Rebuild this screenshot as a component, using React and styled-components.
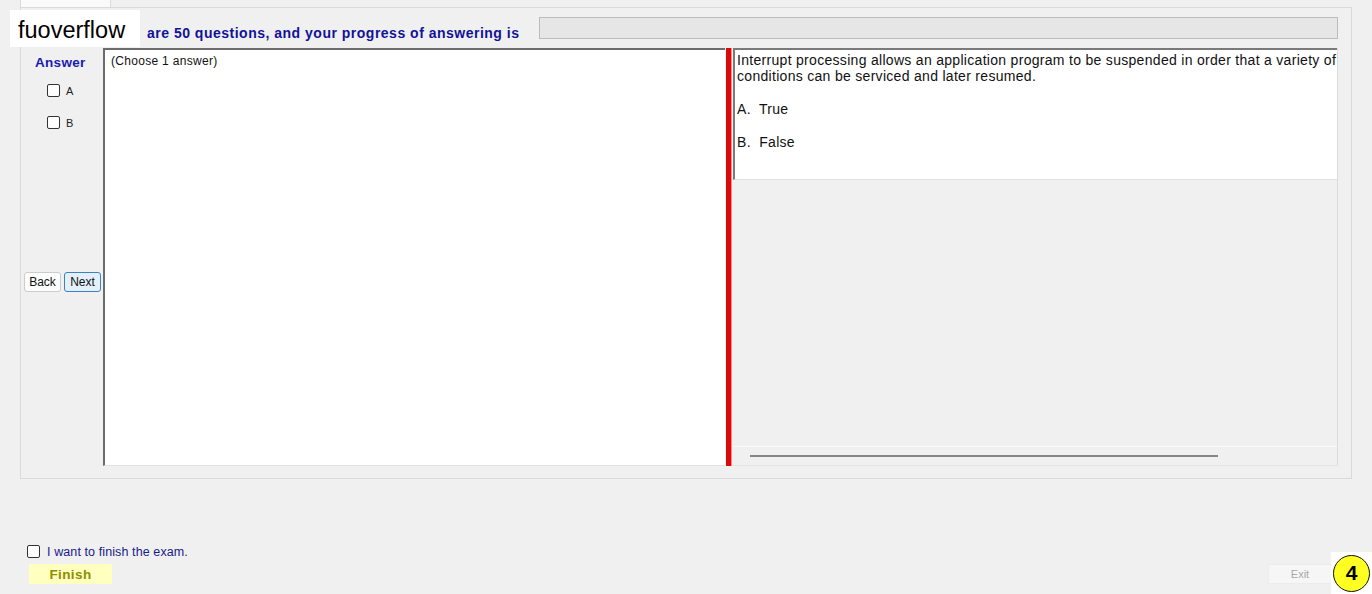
import React from 'react';
import styled, { createGlobalStyle } from 'styled-components';

const GlobalStyle = createGlobalStyle`
  html, body {
    margin: 0;
    padding: 0;
    background: #f0f0f0;
  }
  body {
    font-family: "Liberation Sans", Arial, sans-serif;
    width: 1372px;
    height: 594px;
    overflow: hidden;
  }
`;

const Screen = styled.div`
  position: relative;
  width: 1372px;
  height: 594px;
  background: #f0f0f0;
  display: flex;
  flex-direction: column;
`;

const TabStrip = styled.div`
  height: 7px;
  display: flex;
  padding-left: 20px;
`;

const Tab = styled.div`
  width: 89px;
  background: #fafafa;
  border: 1px solid #dadada;
  border-top: none;
  border-bottom: none;
`;

const TabPanel = styled.div`
  margin: 0 20px;
  height: 472px;
  box-sizing: border-box;
  border: 1px solid #dadada;
  padding: 9px 13px 0 3px;
  display: flex;
  flex-direction: column;
`;

const Header = styled.div`
  height: 22px;
  display: flex;
  align-items: center;
`;

const HeaderText = styled.div`
  padding-left: 123px;
  padding-top: 9px;
  font-size: 14px;
  letter-spacing: 0.5px;
  font-weight: bold;
  color: #12129a;
  white-space: nowrap;
`;

const Progress = styled.div`
  flex: 1;
  height: 22px;
  box-sizing: border-box;
  margin-left: 19px;
  background: #e6e6e6;
  border: 1px solid #bcbcbc;
`;

const Content = styled.div`
  margin-top: 9px;
  height: 418px;
  display: flex;
`;

const AnswerCol = styled.div`
  width: 79px;
  display: flex;
  flex-direction: column;
  padding-top: 8px;
`;

const AnswerTitle = styled.div`
  font-size: 13.5px;
  font-weight: bold;
  letter-spacing: 0.3px;
  color: #1b1bb0;
  line-height: 14px;
  padding-left: 11px;
`;

const Option = styled.label`
  display: flex;
  align-items: center;
  gap: 6px;
  margin-top: ${p => p.$top}px;
  padding-left: 23px;
  font-size: 11px;
  color: #222;
  height: 13px;
`;

const Box = styled.input.attrs({ type: 'checkbox' })`
  appearance: none;
  margin: 0;
  width: 13px;
  height: 13px;
  box-sizing: border-box;
  border: 1px solid #333;
  border-radius: 2px;
  background: #fff;
`;

const NavRow = styled.div`
  display: flex;
  gap: 3px;
  margin-top: 143px;
`;

const NavButton = styled.button`
  width: 37px;
  height: 20px;
  padding: 0;
  font-family: "Liberation Sans", Arial, sans-serif;
  font-size: 12px;
  color: #111;
  border-radius: 3px;
  border: 1px solid ${p => (p.$active ? '#3a82c0' : '#cccccc')};
  background: ${p => (p.$active ? '#e3f0fb' : '#fdfdfd')};
`;

const ChoiceBox = styled.div`
  width: 622px;
  box-sizing: border-box;
  background: #fff;
  border-left: 2px solid #6c6c6c;
  border-top: 2px solid #6c6c6c;
  border-bottom: 1px solid #e2e2e2;
  padding: 4px 6px;
  font-size: 12px;
  letter-spacing: 0.3px;
  color: #111;
`;

const Splitter = styled.div`
  width: 5px;
  margin-left: 1px;
  background: #d80a0a;
  border-right: 1px solid #ff8a8a;
`;

const QuestionPane = styled.div`
  flex: 1;
  margin-left: 1px;
  display: flex;
  flex-direction: column;
  border-right: 1px solid #dcdcdc;
  border-bottom: 1px solid #e4e4e4;
`;

const QuestionBody = styled.div`
  height: 127px;
  background: #fff;
  border-top: 2px solid #7a7a7a;
  border-left: 2px solid #7a7a7a;
  border-bottom: 1px solid #e2e2e2;
  padding: 2px 0 0 2px;
  font-size: 14px;
  letter-spacing: 0.3px;
  line-height: 16px;
  color: #111;
  overflow: hidden;
`;

const Para = styled.p`
  margin: 0 0 ${p => p.$gap}px 0;
  white-space: nowrap;
`;

const Blank = styled.div`
  flex: 1;
`;

const ScrollArea = styled.div`
  height: 18px;
  border-top: 1px solid #fafafa;
  display: flex;
  align-items: center;
  padding-left: 17px;
`;

const Thumb = styled.div`
  width: 468px;
  height: 2px;
  background: #858585;
`;

const Footer = styled.div`
  margin-top: 66px;
  display: flex;
  flex-direction: column;
`;

const FinishCheck = styled.label`
  display: flex;
  align-items: center;
  gap: 7px;
  padding-left: 27px;
  height: 13px;
  font-size: 12.5px;
  letter-spacing: 0.1px;
  color: #1a1a8a;
`;

const ButtonRow = styled.div`
  margin-top: 6px;
  display: flex;
  justify-content: space-between;
  padding: 0 40px 0 29px;
`;

const FinishButton = styled.div`
  width: 83px;
  height: 20px;
  background: #ffffbf;
  color: #8e8e00;
  font-size: 13.5px;
  letter-spacing: 0.4px;
  font-weight: bold;
  display: flex;
  align-items: center;
  justify-content: center;
`;

const ExitButton = styled.div`
  width: 64px;
  height: 20px;
  box-sizing: border-box;
  background: #f6f6f6;
  border: 1px solid #ececec;
  color: #a8a8a8;
  font-size: 11px;
  display: flex;
  align-items: center;
  justify-content: center;
`;

const Watermark = styled.div`
  position: absolute;
  left: 10px;
  top: 10px;
  width: 130px;
  height: 37px;
  box-sizing: border-box;
  padding: 3px 0 0 8px;
  background: #fff;
  color: #000;
  font-size: 23.5px;
  display: flex;
  align-items: center;
`;

const BadgeHolder = styled.div`
  position: absolute;
  right: 0;
  bottom: 0;
  width: 41px;
  height: 42px;
  background: #fff;
  display: flex;
  align-items: center;
  justify-content: center;
`;

const Badge = styled.div`
  width: 35px;
  height: 35px;
  border-radius: 50%;
  border: 1.5px solid #111;
  background: #ffff22;
  color: #000;
  font-size: 21px;
  font-weight: bold;
  display: flex;
  align-items: center;
  justify-content: center;
`;

export default function App() {
  return (
    <Screen>
      <GlobalStyle />
      <TabStrip>
        <Tab />
      </TabStrip>
      <TabPanel>
        <Header>
          <HeaderText>are 50 questions, and your progress of answering is</HeaderText>
          <Progress />
        </Header>
        <Content>
          <AnswerCol>
            <AnswerTitle>Answer</AnswerTitle>
            <Option $top={14}>
              <Box />A
            </Option>
            <Option $top={19}>
              <Box />B
            </Option>
            <NavRow>
              <NavButton>Back</NavButton>
              <NavButton $active>Next</NavButton>
            </NavRow>
          </AnswerCol>
          <ChoiceBox>(Choose 1 answer)</ChoiceBox>
          <Splitter />
          <QuestionPane>
            <QuestionBody>
              <Para $gap={17}>
                Interrupt processing allows an application program to be suspended in order that a variety of
                <br />
                conditions can be serviced and later resumed.
              </Para>
              <Para $gap={17}>A.&nbsp; True</Para>
              <Para $gap={0}>B.&nbsp; False</Para>
            </QuestionBody>
            <Blank />
            <ScrollArea>
              <Thumb />
            </ScrollArea>
          </QuestionPane>
        </Content>
      </TabPanel>
      <Footer>
        <FinishCheck>
          <Box />I want to finish the exam.
        </FinishCheck>
        <ButtonRow>
          <FinishButton>Finish</FinishButton>
          <ExitButton>Exit</ExitButton>
        </ButtonRow>
      </Footer>
      <Watermark>fuoverflow</Watermark>
      <BadgeHolder>
        <Badge>4</Badge>
      </BadgeHolder>
    </Screen>
  );
}
